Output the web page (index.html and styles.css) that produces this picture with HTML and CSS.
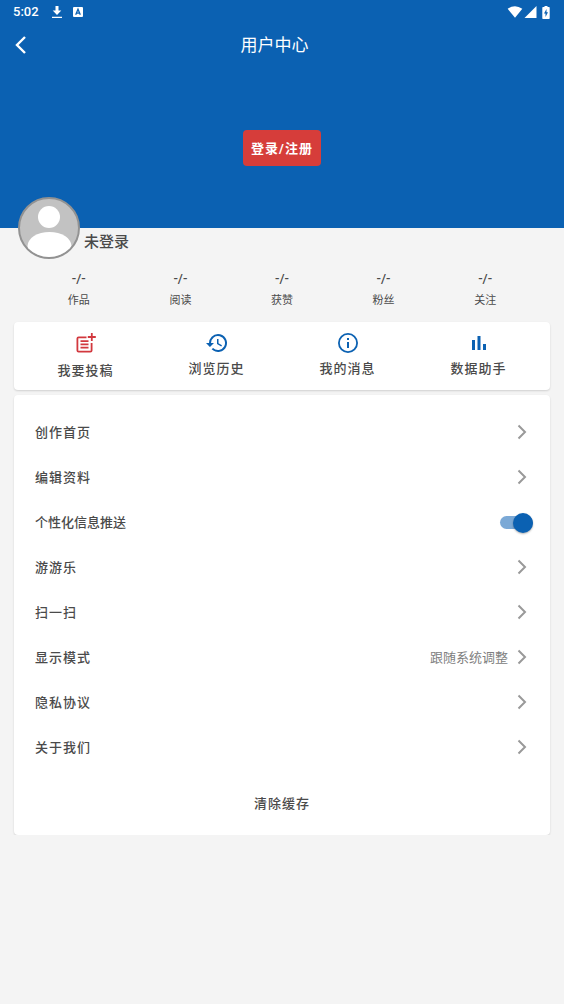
FILE: index.html
```html
<!DOCTYPE html>
<html lang="zh-CN">
<head>
<meta charset="utf-8">
<meta name="viewport" content="width=device-width, initial-scale=1">
<title>用户中心</title>
<link rel="stylesheet" href="styles.css">
</head>
<body>
<header class="hero">
  <div class="status">
    <span class="clock">5:02</span>
    <svg class="status-download" width="12" height="14" viewBox="0 0 12 14" fill="currentColor"><path d="M4.500 1h3v4.500h2.800L6 10 1.700 5.500h2.800zM1 11.700h10V13H1z"/></svg>
    <svg class="status-app" width="10" height="10" viewBox="0 0 10 10"><rect width="10" height="10" rx="1" fill="currentColor"/><path d="M2.700 7.800 5 2.300l2.300 5.500M3.600 6.200h2.800" fill="none" stroke="#0b61b2" stroke-width="1.300"/></svg>
    <span class="status-right">
      <svg width="16" height="12" viewBox="0 0 16 12" fill="currentColor"><path d="M8 11.800.7 2.800Q8-2.300 15.300 2.800z"/></svg>
      <svg width="13" height="12" viewBox="0 0 13 12" fill="currentColor"><path d="M12.500 0v12H.5z"/></svg>
      <svg class="battery" width="8" height="13" viewBox="0 0 8 13"><path d="M2.500 0h3v1H7q.7 0 .7.7v10.600q0 .7-.7.7H1q-.7 0-.7-.7V1.700Q.3 1 1 1h1.500z" fill="currentColor"/><path d="M4.500 3 2 7.500h1.500V11L6 6.300H4.500z" fill="#0b61b2"/></svg>
    </span>
  </div>
  <div class="topbar">
    <button class="back" type="button" aria-label="返回"><svg width="12" height="20" viewBox="0 0 12 20"><path d="M10 2 2 10l8 8" fill="none" stroke="currentColor" stroke-width="2.400"/></svg></button>
    <h1 class="title">用户中心</h1>
  </div>
  <button class="login" type="button">登录/注册</button>
</header>
<main>
  <section class="profile">
    <svg class="avatar" width="62" height="62" viewBox="0 0 62 62"><defs><clipPath id="face"><circle cx="31" cy="31" r="29"/></clipPath></defs><circle cx="31" cy="31" r="30" fill="#c2c2c2" stroke="#929292" stroke-width="2"/><g clip-path="url(#face)" fill="#fff"><circle cx="31" cy="20" r="11"/><ellipse cx="31.500" cy="49" rx="22" ry="14"/></g></svg>
    <span class="name">未登录</span>
  </section>
  <ul class="stats">
    <li><b>-/-</b><span>作品</span></li>
    <li><b>-/-</b><span>阅读</span></li>
    <li><b>-/-</b><span>获赞</span></li>
    <li><b>-/-</b><span>粉丝</span></li>
    <li><b>-/-</b><span>关注</span></li>
  </ul>
  <nav class="card tiles">
    <button class="tile post" type="button"><svg width="24" height="24" viewBox="0 0 24 24" fill="none" stroke="currentColor" stroke-width="1.800"><path d="M12.500 6.400H4.600q-1.200 0-1.200 1.200v11.800q0 1.200 1.200 1.200h11.800q1.200 0 1.200-1.200V12M6.500 10.200h8M6.500 13.400h8M6.500 16.600h8M17.800 2v8M13.800 6h8"/></svg><span>我要投稿</span></button>
    <button class="tile" type="button"><svg width="24" height="24" viewBox="0 0 24 24" fill="currentColor"><path d="M13 3a9 9 0 0 0-9 9H1l3.890 3.890.070.140L9 12H6a7 7 0 1 1 2.060 4.940l-1.420 1.420A9 9 0 1 0 13 3zm-1 5v5l4.280 2.540.72-1.210-3.500-2.080V8z"/></svg><span>浏览历史</span></button>
    <button class="tile" type="button"><svg width="24" height="24" viewBox="0 0 24 24" fill="currentColor"><path d="M11 7h2v2h-2zm0 4h2v6h-2zm1-9a10 10 0 1 0 0 20 10 10 0 0 0 0-20zm0 18.200a8.200 8.200 0 1 1 0-16.400 8.200 8.200 0 0 1 0 16.400z"/></svg><span>我的消息</span></button>
    <button class="tile" type="button"><svg width="24" height="24" viewBox="0 0 24 24" fill="currentColor"><path d="M5 9h3v10H5zm5.500-4h3v14h-3zM16 13h3v6h-3z"/></svg><span>数据助手</span></button>
  </nav>
  <section class="card menu">
    <a class="row" href="#"><span>创作首页</span><svg class="chevron" viewBox="0 0 10 16"><path d="m1.500 1.500 6.500 6.500-6.500 6.500"/></svg></a>
    <a class="row" href="#"><span>编辑资料</span><svg class="chevron" viewBox="0 0 10 16"><path d="m1.500 1.500 6.500 6.500-6.500 6.500"/></svg></a>
    <label class="row push"><span>个性化信息推送</span><input class="switch" type="checkbox" role="switch" checked></label>
    <a class="row" href="#"><span>游游乐</span><svg class="chevron" viewBox="0 0 10 16"><path d="m1.500 1.500 6.500 6.500-6.500 6.500"/></svg></a>
    <a class="row" href="#"><span>扫一扫</span><svg class="chevron" viewBox="0 0 10 16"><path d="m1.500 1.500 6.500 6.500-6.500 6.500"/></svg></a>
    <a class="row" href="#"><span>显示模式</span><span class="value">跟随系统调整</span><svg class="chevron" viewBox="0 0 10 16"><path d="m1.500 1.500 6.500 6.500-6.500 6.500"/></svg></a>
    <a class="row" href="#"><span>隐私协议</span><svg class="chevron" viewBox="0 0 10 16"><path d="m1.500 1.500 6.500 6.500-6.500 6.500"/></svg></a>
    <a class="row" href="#"><span>关于我们</span><svg class="chevron" viewBox="0 0 10 16"><path d="m1.500 1.500 6.500 6.500-6.500 6.500"/></svg></a>
    <button class="clear" type="button">清除缓存</button>
  </section>
</main>
</body>
</html>
```
FILE: styles.css
```css
* { box-sizing: border-box; }

body {
  margin: 0;
  background: #f4f4f4;
  color: #4a4a4a;
  font: 500 13px/20px Roboto, "Noto Sans CJK SC", sans-serif;
}

button {
  margin: 0;
  padding: 0;
  border: 0;
  background: none;
  color: inherit;
  font: inherit;
}

svg { display: block; flex: none; }

.hero {
  display: flex;
  flex-direction: column;
  align-items: center;
  height: 228px;
  background: #0b61b2;
  color: #fff;
}

.status {
  display: flex;
  align-items: center;
  width: 100%;
  height: 24px;
  padding: 0 14px 0 13px;
}

.clock { font-size: 13px; }
.status-download { margin-left: 12px; }
.status-app { margin-left: 10px; }

.status-right {
  display: flex;
  align-items: center;
  gap: 1px;
  margin-left: auto;
}

.battery { margin-left: 4px; }

.topbar {
  display: grid;
  grid-template-columns: 40px 1fr 55px;
  align-items: center;
  width: 100%;
  height: 42px;
}

.back {
  display: flex;
  align-items: center;
  height: 42px;
  padding-left: 15px;
}

.title {
  margin: 0;
  font-size: 17px;
  font-weight: 400;
  text-align: center;
}

.login {
  height: 36px;
  margin-top: 64px;
  padding: 2px 8px 0;
  border-radius: 4px;
  background: #d63d3a;
  font-weight: 700;
  letter-spacing: 1px;
}

.profile {
  display: flex;
  align-items: flex-end;
  gap: 4px;
  margin-top: -31px;
  padding-left: 18px;
}

.name {
  padding-bottom: 7px;
  font-size: 15px;
}

.stats {
  display: flex;
  margin: 10px 0 0;
  padding: 0 28px;
  list-style: none;
}

.stats li {
  display: flex;
  flex: 1;
  flex-direction: column;
  align-items: center;
  gap: 2px;
}

.stats b { font-weight: 500; }

.stats span {
  font-size: 11px;
  font-weight: 400;
}

.card {
  margin: 0 14px;
  border-radius: 4px;
  background: #fff;
  box-shadow: 0 1px 2px rgba(0, 0, 0, 0.15);
}

.tiles {
  display: flex;
  align-items: flex-start;
  height: 68px;
  margin-top: 11px;
  padding: 9px 6px 0;
}

.tile {
  display: flex;
  flex: 1;
  flex-direction: column;
  align-items: center;
  gap: 4px;
  letter-spacing: 1px;
}

.tile svg { color: #0b61b2; }
.post svg { color: #d2383e; }
.post { gap: 6px; }

.menu {
  margin-top: 5px;
  padding: 15px 0 12px;
}

.row {
  display: flex;
  align-items: center;
  height: 45px;
  padding: 0 17px 0 21px;
  color: inherit;
  letter-spacing: 1px;
  text-decoration: none;
}

.chevron {
  width: 10px;
  height: 16px;
  margin: 0 6px 2px auto;
  fill: none;
  stroke: #999;
  stroke-width: 2;
}

.value {
  margin-left: auto;
  color: #808080;
  font-weight: 400;
  letter-spacing: normal;
}

.value + .chevron { margin-left: 9px; }

.push { letter-spacing: normal; }

.switch {
  display: flex;
  align-items: center;
  justify-content: flex-end;
  width: 33px;
  height: 13px;
  margin: 0 0 0 auto;
  border-radius: 8px;
  background: #7ba9d6;
  appearance: none;
}

.switch::before {
  width: 20px;
  height: 20px;
  border-radius: 50%;
  background: #0b61b2;
  box-shadow: 0 1px 2px rgba(0, 0, 0, 0.3);
  content: "";
}

.switch:not(:checked) { justify-content: flex-start; }

.clear {
  display: block;
  width: 100%;
  height: 36px;
  margin-top: 16px;
  margin-bottom: 1px;
  letter-spacing: 1px;
}
```
